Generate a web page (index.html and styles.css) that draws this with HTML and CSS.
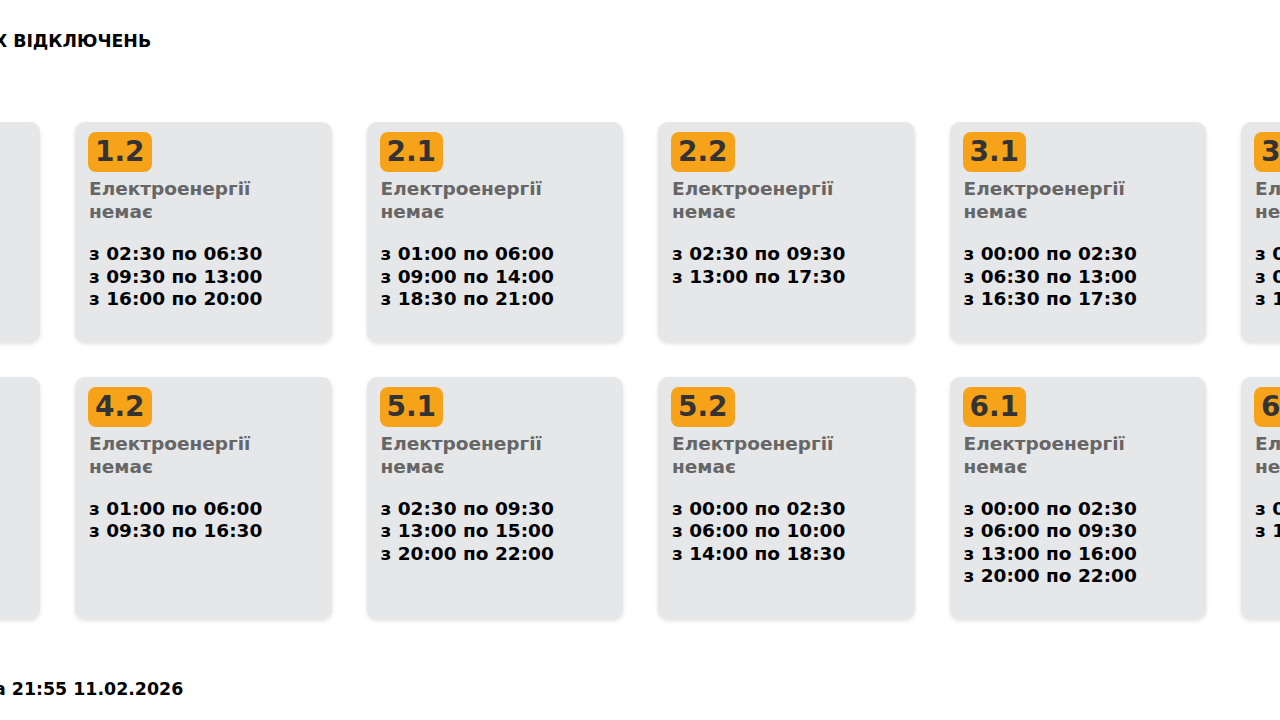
FILE: index.html
```html
<!DOCTYPE html>
<html lang="uk">
<head>
<meta charset="utf-8">
<title>Графік погодинних відключень</title>
<link rel="stylesheet" href="styles.css">
</head>
<body>
<div class="page">
  <h1 class="title">ГРАФІК ПОГОДИННИХ ВІДКЛЮЧЕНЬ</h1>
  <div class="grid">
    <div class="card"><span class="badge">1.1</span><p class="status">Електроенергії немає</p><p class="times">з 00:00 по 02:30<br>з 06:00 по 09:30<br>з 13:00 по 16:30</p></div>
    <div class="card"><span class="badge">1.2</span><p class="status">Електроенергії немає</p><p class="times">з 02:30 по 06:30<br>з 09:30 по 13:00<br>з 16:00 по 20:00</p></div>
    <div class="card"><span class="badge">2.1</span><p class="status">Електроенергії немає</p><p class="times">з 01:00 по 06:00<br>з 09:00 по 14:00<br>з 18:30 по 21:00</p></div>
    <div class="card"><span class="badge">2.2</span><p class="status">Електроенергії немає</p><p class="times">з 02:30 по 09:30<br>з 13:00 по 17:30</p></div>
    <div class="card"><span class="badge">3.1</span><p class="status">Електроенергії немає</p><p class="times">з 00:00 по 02:30<br>з 06:30 по 13:00<br>з 16:30 по 17:30</p></div>
    <div class="card"><span class="badge">3.2</span><p class="status">Електроенергії немає</p><p class="times">з 02:30 по 06:30<br>з 09:30 по 13:00<br>з 16:30 по 20:00</p></div>
    <div class="card"><span class="badge">4.1</span><p class="status">Електроенергії немає</p><p class="times">з 01:00 по 06:00<br>з 09:30 по 13:00</p></div>
    <div class="card"><span class="badge">4.2</span><p class="status">Електроенергії немає</p><p class="times">з 01:00 по 06:00<br>з 09:30 по 16:30</p></div>
    <div class="card"><span class="badge">5.1</span><p class="status">Електроенергії немає</p><p class="times">з 02:30 по 09:30<br>з 13:00 по 15:00<br>з 20:00 по 22:00</p></div>
    <div class="card"><span class="badge">5.2</span><p class="status">Електроенергії немає</p><p class="times">з 00:00 по 02:30<br>з 06:00 по 10:00<br>з 14:00 по 18:30</p></div>
    <div class="card"><span class="badge">6.1</span><p class="status">Електроенергії немає</p><p class="times">з 00:00 по 02:30<br>з 06:00 по 09:30<br>з 13:00 по 16:00<br>з 20:00 по 22:00</p></div>
    <div class="card"><span class="badge">6.2</span><p class="status">Електроенергії немає</p><p class="times">з 02:30 по 06:00<br>з 13:00 по 16:30</p></div>
  </div>
  <p class="footer">Інформація станом на 21:55 11.02.2026</p>
</div>
</body>
</html>
```
FILE: styles.css
```css
html, body {
  margin: 0;
  padding: 0;
  background: #ffffff;
  overflow: hidden;
}

body {
  font-family: "DejaVu Sans", "Noto Sans", sans-serif;
  font-weight: bold;
  color: #000;
}

.page {
  margin-left: -216.5px;
  padding-top: 31px;
  width: 1714px;
}

.title {
  margin: 0 0 71px 0;
  font-size: 17.4px;
  line-height: 20px;
  font-weight: bold;
}

.grid {
  display: grid;
  grid-template-columns: repeat(6, 256.5px);
  gap: 35px;
}

.card {
  background: #e6e7e9;
  border-radius: 10px;
  box-shadow: 0 2px 4px rgba(0, 0, 0, 0.12);
  padding: 10px 14px 14px 14px;
}

.badge {
  display: inline-block;
  margin-left: -1px;
  background: #f6a31a;
  color: #333333;
  font-size: 28px;
  line-height: 40px;
  padding: 0 7px;
  border-radius: 8px;
}

.status {
  margin: 5px 0 0 0;
  width: 180px;
  font-size: 18.5px;
  line-height: 23px;
  color: #666666;
}

.times {
  margin: 20px 0 17px 0;
  font-size: 18.5px;
  line-height: 22.5px;
  color: #000;
}

.footer {
  margin: 60px 0 0 0;
  font-size: 17.4px;
  line-height: 20px;
}
```
